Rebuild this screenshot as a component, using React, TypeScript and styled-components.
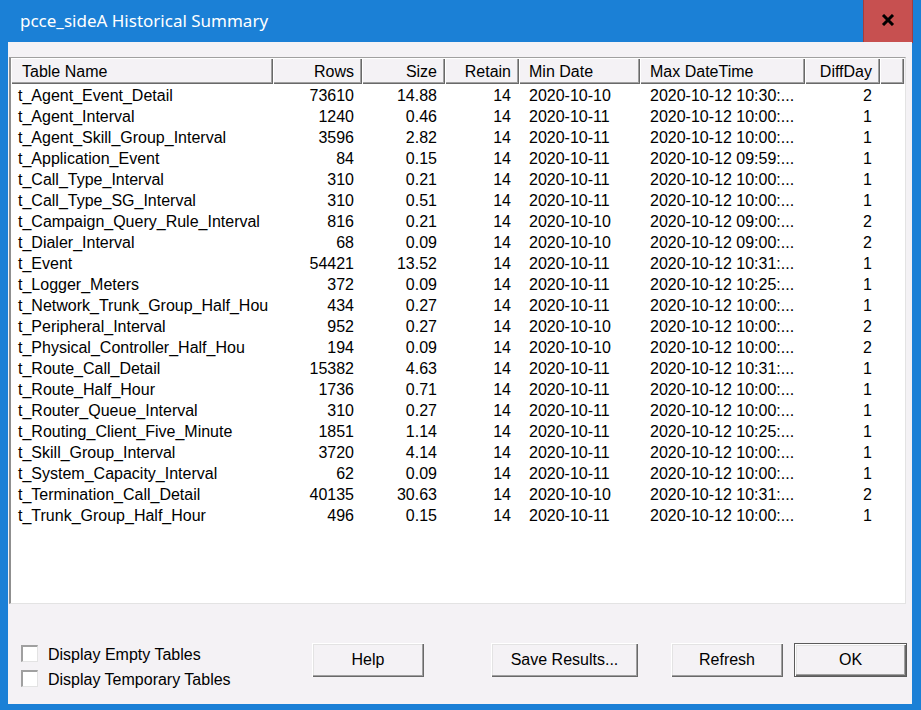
import React from "react";
import styled, { createGlobalStyle } from "styled-components";

const GlobalStyle = createGlobalStyle`
  html, body { margin: 0; padding: 0; }
  body { background: #1b80d6; }
`;

const FONT = `"Liberation Sans", Arial, sans-serif`;

const Window = styled.div`
  width: 921px;
  height: 710px;
  background: #1b80d6;
  display: flex;
  flex-direction: column;
  overflow: hidden;
`;

const TitleBar = styled.div`
  height: 42px;
  display: flex;
  align-items: center;
  padding-left: 20px;
  padding-right: 8px;
  flex-shrink: 0;
`;

const Title = styled.div`
  flex: 1;
  color: #ffffff;
  font-family: "Noto Sans", "Open Sans", sans-serif;
  font-size: 17px;
  margin-top: -1px;
`;

const CloseButton = styled.div`
  width: 50px;
  height: 43px;
  align-self: flex-start;
  box-sizing: border-box;
  background: #c75050;
  border: 1px solid #a33d3d;
  border-top: none;
  display: flex;
  align-items: center;
  justify-content: center;
  padding-bottom: 2px;
`;

const Client = styled.div`
  flex: 1;
  margin: 0 9px 6px 8px;
  background: #f4f2f5;
  display: flex;
  flex-direction: column;
  padding: 15px 6px 0 1px;
  font-family: ${FONT};
  font-size: 16px;
  color: #000;
`;

const ListView = styled.div`
  height: 547px;
  box-sizing: border-box;
  background: #ffffff;
  border-top: 1px solid #a0a0a0;
  border-left: 2px solid #8f8f8f;
  border-right: 1px solid #e3e3e3;
  border-bottom: 1px solid #e3e3e3;
  display: flex;
  flex-direction: column;
`;

const COLS = "262px 89px 83px 74px 121px 165px 75px 24px";

const HeaderRow = styled.div`
  display: grid;
  grid-template-columns: ${COLS};
  height: 26px;
  background: #f4f2f5;
`;

const HeaderCell = styled.div<{ $align: string; $first?: boolean }>`
  box-sizing: border-box;
  height: 26px;
  display: flex;
  align-items: center;
  justify-content: ${(p) => (p.$align === "right" ? "flex-end" : "flex-start")};
  padding: 2px 8px 0 ${(p) => (p.$first ? 11 : 10)}px;
  white-space: nowrap;
  overflow: hidden;
  box-shadow: inset 1px 1px 0 #ffffff, inset -1px -1px 0 #696969,
    inset -2px -2px 0 #a0a0a0;
`;

const Body = styled.div`
  flex: 1;
`;

const DataRow = styled.div`
  display: grid;
  grid-template-columns: ${COLS};
  height: 21px;
  align-items: center;
`;

const Cell = styled.div<{ $align: string; $first?: boolean }>`
  box-sizing: border-box;
  text-align: ${(p) => p.$align};
  padding: 2px 8px 0 ${(p) => (p.$first ? 7 : 10)}px;
  white-space: nowrap;
  overflow: hidden;
  line-height: 19px;
  height: 21px;
`;

const Footer = styled.div`
  flex: 1;
  display: flex;
  align-items: flex-start;
  padding-top: 39px;
  margin-right: -4px;
`;

const CheckGroup = styled.div`
  display: flex;
  flex-direction: column;
  gap: 7px;
  padding-left: 12px;
  padding-top: 1px;
  width: 291px;
  flex-shrink: 0;
`;

const CheckRow = styled.label`
  display: flex;
  align-items: center;
  gap: 10px;
  height: 18px;
`;

const CheckLabel = styled.span`
  padding-top: 3px;
`;

const CheckBox = styled.span`
  width: 17px;
  height: 17px;
  box-sizing: border-box;
  background: #ffffff;
  border-top: 2px solid #a0a0a0;
  border-left: 2px solid #a0a0a0;
  border-right: 1px solid #e3e3e3;
  border-bottom: 1px solid #e3e3e3;
  flex-shrink: 0;
`;

const Button = styled.div<{ $width: number; $gap: number; $default?: boolean }>`
  width: ${(p) => p.$width}px;
  height: 34px;
  margin-left: ${(p) => p.$gap}px;
  box-sizing: border-box;
  background: #f4f2f5;
  display: flex;
  align-items: center;
  justify-content: center;
  border: ${(p) => (p.$default ? "1px solid #5a5a5a" : "none")};
  box-shadow: inset 1px 1px 0 #ffffff, inset -1px -1px 0 #696969,
    inset -2px -2px 0 #a0a0a0, inset 2px 2px 0 #e3e3e3;
  padding-bottom: 1px;
  flex-shrink: 0;
`;

type Align = "left" | "right";
const columns: { label: string; align: Align }[] = [
  { label: "Table Name", align: "left" },
  { label: "Rows", align: "right" },
  { label: "Size", align: "right" },
  { label: "Retain", align: "right" },
  { label: "Min Date", align: "left" },
  { label: "Max DateTime", align: "left" },
  { label: "DiffDay", align: "right" },
  { label: "", align: "left" },
];

const rows: string[][] = [
  ["t_Agent_Event_Detail", "73610", "14.88", "14", "2020-10-10", "2020-10-12 10:30:...", "2"],
  ["t_Agent_Interval", "1240", "0.46", "14", "2020-10-11", "2020-10-12 10:00:...", "1"],
  ["t_Agent_Skill_Group_Interval", "3596", "2.82", "14", "2020-10-11", "2020-10-12 10:00:...", "1"],
  ["t_Application_Event", "84", "0.15", "14", "2020-10-11", "2020-10-12 09:59:...", "1"],
  ["t_Call_Type_Interval", "310", "0.21", "14", "2020-10-11", "2020-10-12 10:00:...", "1"],
  ["t_Call_Type_SG_Interval", "310", "0.51", "14", "2020-10-11", "2020-10-12 10:00:...", "1"],
  ["t_Campaign_Query_Rule_Interval", "816", "0.21", "14", "2020-10-10", "2020-10-12 09:00:...", "2"],
  ["t_Dialer_Interval", "68", "0.09", "14", "2020-10-10", "2020-10-12 09:00:...", "2"],
  ["t_Event", "54421", "13.52", "14", "2020-10-11", "2020-10-12 10:31:...", "1"],
  ["t_Logger_Meters", "372", "0.09", "14", "2020-10-11", "2020-10-12 10:25:...", "1"],
  ["t_Network_Trunk_Group_Half_Hou", "434", "0.27", "14", "2020-10-11", "2020-10-12 10:00:...", "1"],
  ["t_Peripheral_Interval", "952", "0.27", "14", "2020-10-10", "2020-10-12 10:00:...", "2"],
  ["t_Physical_Controller_Half_Hou", "194", "0.09", "14", "2020-10-10", "2020-10-12 10:00:...", "2"],
  ["t_Route_Call_Detail", "15382", "4.63", "14", "2020-10-11", "2020-10-12 10:31:...", "1"],
  ["t_Route_Half_Hour", "1736", "0.71", "14", "2020-10-11", "2020-10-12 10:00:...", "1"],
  ["t_Router_Queue_Interval", "310", "0.27", "14", "2020-10-11", "2020-10-12 10:00:...", "1"],
  ["t_Routing_Client_Five_Minute", "1851", "1.14", "14", "2020-10-11", "2020-10-12 10:25:...", "1"],
  ["t_Skill_Group_Interval", "3720", "4.14", "14", "2020-10-11", "2020-10-12 10:00:...", "1"],
  ["t_System_Capacity_Interval", "62", "0.09", "14", "2020-10-11", "2020-10-12 10:00:...", "1"],
  ["t_Termination_Call_Detail", "40135", "30.63", "14", "2020-10-10", "2020-10-12 10:31:...", "2"],
  ["t_Trunk_Group_Half_Hour", "496", "0.15", "14", "2020-10-11", "2020-10-12 10:00:...", "1"],
];

export default function App() {
  return (
    <>
      <GlobalStyle />
      <Window>
        <TitleBar>
          <Title>pcce_sideA Historical Summary</Title>
          <CloseButton>
            <svg width="14" height="12" viewBox="0 0 14 12">
              <path d="M2 1 L12 11 M12 1 L2 11" stroke="#000" strokeWidth="3" />
            </svg>
          </CloseButton>
        </TitleBar>
        <Client>
          <ListView>
            <HeaderRow>
              {columns.map((c, i) => (
                <HeaderCell key={i} $align={c.align} $first={i === 0}>
                  {c.label}
                </HeaderCell>
              ))}
            </HeaderRow>
            <Body>
              {rows.map((r, ri) => (
                <DataRow key={ri}>
                  {r.map((v, ci) => (
                    <Cell key={ci} $align={columns[ci].align} $first={ci === 0}>
                      {v}
                    </Cell>
                  ))}
                </DataRow>
              ))}
            </Body>
          </ListView>
          <Footer>
            <CheckGroup>
              <CheckRow>
                <CheckBox />
                <CheckLabel>Display Empty Tables</CheckLabel>
              </CheckRow>
              <CheckRow>
                <CheckBox />
                <CheckLabel>Display Temporary Tables</CheckLabel>
              </CheckRow>
            </CheckGroup>
            <Button $width={112} $gap={0}>Help</Button>
            <Button $width={147} $gap={67}>Save Results...</Button>
            <Button $width={112} $gap={33}>Refresh</Button>
            <Button $width={113} $gap={11} $default>OK</Button>
          </Footer>
        </Client>
      </Window>
    </>
  );
}
